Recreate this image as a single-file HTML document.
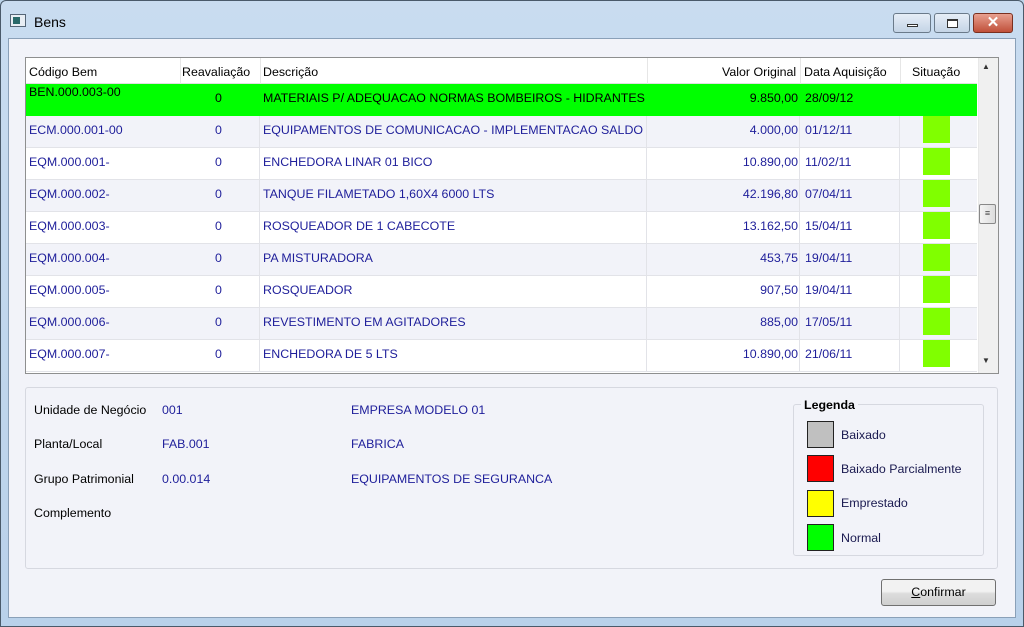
<!DOCTYPE html>
<html><head><meta charset="utf-8"><style>
*{margin:0;padding:0;box-sizing:border-box}
body{width:1024px;height:627px;overflow:hidden;background:#bcd4ea;font-family:"Liberation Sans",sans-serif;font-size:12.4px;position:relative}
.a{position:absolute}
#frame{left:0;top:0;width:1024px;height:627px;background:linear-gradient(#c9dcf0,#b9d1ea);border:1px solid #4a5a6a;border-radius:6px 6px 0 0}
#client{left:8px;top:38px;width:1008px;height:580px;background:#f2f3f9;border:1px solid #8aa0b8}
#grid{left:25px;top:57px;width:974px;height:317px;background:#fff;border:1px solid #8e8f8f;overflow:hidden}
.row{position:absolute;left:0;width:951px;height:32px;border-bottom:1px solid #e2e3e8;color:#1e1e9a}
.row div,.hd div{position:absolute;top:0;white-space:nowrap}
.c{border-right:1px solid #e2e3e8;height:100%}
.hd{position:absolute;left:0;top:0;width:951px;height:26px;background:#fff;border-bottom:1px solid #e0e0e0}
.hd div{top:7px}
.sq{position:absolute;width:27px;height:27px;background:#80ff00;top:2px}
.lab{color:#000}
.val{color:#1e1e9a}
.lg{width:27px;height:27px;border:1px solid #222}
</style></head><body>
<div class="a" id="frame"></div>
<div class="a" style="left:10px;top:14px;width:16px;height:13px;background:#e8eef4;border:1px solid #567"><div style="margin:2px;width:7px;height:7px;background:#2a6a6a"></div></div>
<div class="a" style="left:34px;top:14px;font-size:14px;color:#000">Bens</div>
<div class="a" style="left:893px;top:13px;width:38px;height:20px;border:1px solid #6a7a8a;border-radius:3px;background:linear-gradient(#e6eef7,#c4d4e6)"><div style="position:absolute;left:13px;top:10px;width:11px;height:3px;border:1px solid #333;background:#fff"></div></div>
<div class="a" style="left:934px;top:13px;width:36px;height:20px;border:1px solid #6a7a8a;border-radius:3px;background:linear-gradient(#e6eef7,#c4d4e6)"><div style="position:absolute;left:12px;top:5px;width:11px;height:9px;border:1px solid #333;border-top-width:2px;background:#fff"></div></div>
<div class="a" style="left:973px;top:13px;width:40px;height:20px;border:1px solid #7a3020;border-radius:3px;background:linear-gradient(#e8a090,#c0503a);color:#fff;font-weight:bold;font-size:15px;text-align:center;line-height:18px">✕</div>
<div class="a" id="client"></div>
<div class="a" id="grid">
<div class="hd">
<div style="left:3px">Código Bem</div><div style="left:156px">Reavaliação</div><div style="left:237px">Descrição</div><div style="left:696px">Valor Original</div><div style="left:778px">Data Aquisição</div><div style="left:886px">Situação</div>
<div style="left:154px;top:0;height:26px;border-left:1px solid #e6e6e6"></div><div style="left:234px;top:0;height:26px;border-left:1px solid #e6e6e6"></div><div style="left:621px;top:0;height:26px;border-left:1px solid #e6e6e6"></div><div style="left:774px;top:0;height:26px;border-left:1px solid #e6e6e6"></div><div style="left:874px;top:0;height:26px;border-left:1px solid #e6e6e6"></div>
</div>
<div id="rows"></div>
<div class="a" style="left:952px;top:0;width:20px;height:315px;background:#f0f0f0;border-left:1px solid #e8e8e8"></div>
<div class="a" style="left:956px;top:4px;font-size:8px;color:#333">▲</div>
<div class="a" style="left:956px;top:298px;font-size:8px;color:#333">▼</div>
<div class="a" style="left:953px;top:146px;width:17px;height:20px;border:1px solid #888;border-radius:2px;background:linear-gradient(90deg,#f4f4f4,#dcdcdc);font-size:9px;line-height:16px;text-align:center;color:#444">≡</div>
</div>
<div class="a" style="left:25px;top:387px;width:973px;height:182px;border:1px solid #d6d8e0;border-radius:3px"></div>
<div class="a lab" style="left:34px;top:403px">Unidade de Negócio</div><div class="a val" style="left:162px;top:403px">001</div><div class="a val" style="left:351px;top:403px">EMPRESA MODELO 01</div>
<div class="a lab" style="left:34px;top:437px">Planta/Local</div><div class="a val" style="left:162px;top:437px">FAB.001</div><div class="a val" style="left:351px;top:437px">FABRICA</div>
<div class="a lab" style="left:34px;top:472px">Grupo Patrimonial</div><div class="a val" style="left:162px;top:472px">0.00.014</div><div class="a val" style="left:351px;top:472px">EQUIPAMENTOS DE SEGURANCA</div>
<div class="a lab" style="left:34px;top:506px">Complemento</div>
<div class="a" style="left:793px;top:404px;width:191px;height:152px;border:1px solid #d6d8e0;border-radius:3px"></div>
<div class="a" style="left:801px;top:398px;padding:0 3px;background:#f2f3f9;font-weight:bold;color:#000">Legenda</div>
<div class="a lg" style="left:807px;top:421px;background:#c0c0c0"></div><div class="a" style="left:841px;top:428px;color:#1a1a50">Baixado</div>
<div class="a lg" style="left:807px;top:455px;background:#ff0000"></div><div class="a" style="left:841px;top:462px;color:#1a1a50">Baixado Parcialmente</div>
<div class="a lg" style="left:807px;top:490px;background:#ffff00"></div><div class="a" style="left:841px;top:496px;color:#1a1a50">Emprestado</div>
<div class="a lg" style="left:807px;top:524px;background:#00ff00"></div><div class="a" style="left:841px;top:531px;color:#1a1a50">Normal</div>
<div class="a" style="left:881px;top:579px;width:115px;height:27px;border:1px solid #707070;border-radius:3px;background:linear-gradient(#f2f2f2 45%,#dcdcdc 55%,#cfcfcf);text-align:center;line-height:25px;color:#000"><u>C</u>onfirmar</div>
<script>
var d=[["BEN.000.003-00","MATERIAIS P/ ADEQUACAO NORMAS BOMBEIROS - HIDRANTES","9.850,00","28/09/12"],
["ECM.000.001-00","EQUIPAMENTOS DE COMUNICACAO - IMPLEMENTACAO SALDO","4.000,00","01/12/11"],
["EQM.000.001-","ENCHEDORA LINAR 01 BICO","10.890,00","11/02/11"],
["EQM.000.002-","TANQUE FILAMETADO 1,60X4 6000 LTS","42.196,80","07/04/11"],
["EQM.000.003-","ROSQUEADOR DE 1 CABECOTE","13.162,50","15/04/11"],
["EQM.000.004-","PA MISTURADORA","453,75","19/04/11"],
["EQM.000.005-","ROSQUEADOR","907,50","19/04/11"],
["EQM.000.006-","REVESTIMENTO EM AGITADORES","885,00","17/05/11"],
["EQM.000.007-","ENCHEDORA DE 5 LTS","10.890,00","21/06/11"]];
var h="";
d.forEach(function(r,i){var top=26+i*32;var g=i==0;
var bg=g?"#00ff00":(i%2?"#f2f3f9":"#fff");
h+='<div class="row" style="top:'+top+'px;background:'+bg+';'+(g?'color:#000;border-bottom:none':'')+'">'+
'<div style="left:3px;top:'+(g?1:7)+'px">'+r[0]+'</div>'+
'<div class="c" style="left:154px;width:80px'+(g?';border:none':'')+'"></div>'+
'<div style="left:189px;top:7px">0</div>'+
'<div style="left:237px;top:7px">'+r[1]+'</div>'+
(g?'':'<div class="c" style="left:234px;width:387px"></div><div class="c" style="left:621px;width:153px"></div><div class="c" style="left:774px;width:100px"></div>')+
'<div style="right:179px;top:7px">'+r[2]+'</div>'+
'<div style="left:779px;top:7px">'+r[3]+'</div>'+
(g?'':'<div class="sq" style="left:897px"></div>')+'</div>';});
document.getElementById("rows").innerHTML=h;
</script>
</body></html>
